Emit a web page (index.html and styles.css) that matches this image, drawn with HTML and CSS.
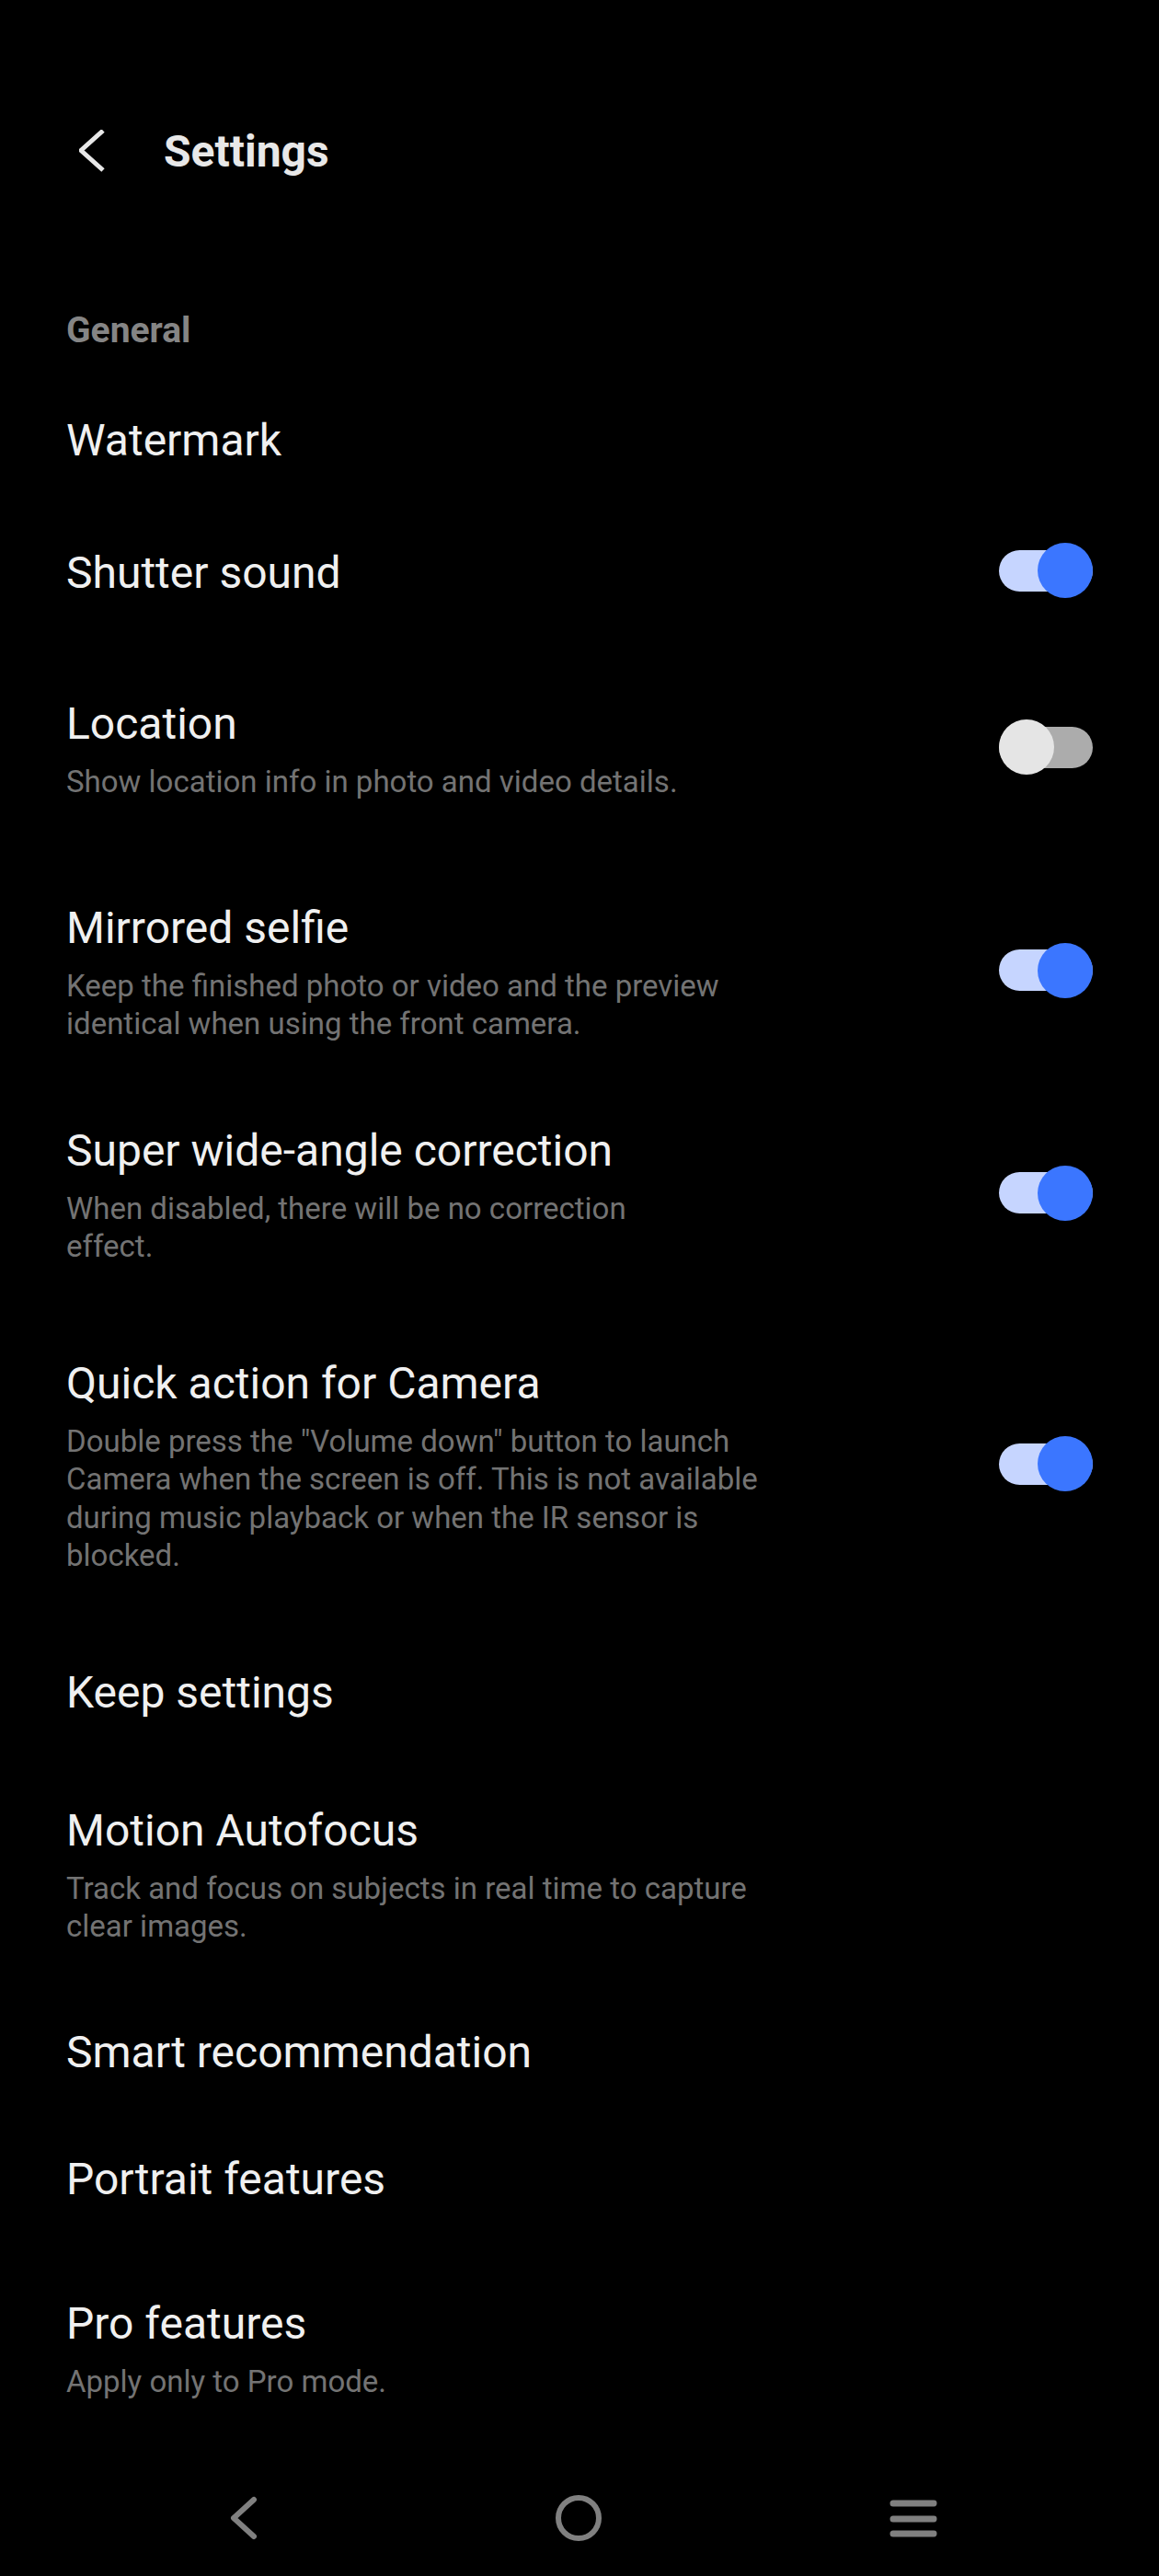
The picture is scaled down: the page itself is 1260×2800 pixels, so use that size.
FILE: index.html
```html
<!DOCTYPE html>
<html lang="en">
<head>
<meta charset="utf-8">
<title>Settings</title>
<link rel="stylesheet" href="styles.css">
</head>
<body>
<div class="screen">
  <header class="header">
    <svg class="back" width="30" height="48" viewBox="0 0 30 48" aria-hidden="true">
      <path d="M26 1 L2 22.5 L26 44" fill="none" stroke="#e8e8e8" stroke-width="5"/>
    </svg>
    <h1 class="title">Settings</h1>
  </header>

  <div class="section-label">General</div>

  <div class="list">
    <div class="row sp-first">
      <div class="row-text"><div class="row-title">Watermark</div></div>
    </div>

    <div class="row sp-83">
      <div class="row-text"><div class="row-title">Shutter sound</div></div>
      <span class="switch on"><span class="track"></span><span class="knob"></span></span>
    </div>

    <div class="row sp-104">
      <div class="row-text">
        <div class="row-title">Location</div>
        <div class="row-sub">Show location info in photo and video details.</div>
      </div>
      <span class="switch off"><span class="track"></span><span class="knob"></span></span>
    </div>

    <div class="row sp-110">
      <div class="row-text">
        <div class="row-title">Mirrored selfie</div>
        <div class="row-sub">Keep the finished photo or video and the preview identical when using the front camera.</div>
      </div>
      <span class="switch on"><span class="track"></span><span class="knob"></span></span>
    </div>

    <div class="row sp-89">
      <div class="row-text">
        <div class="row-title">Super wide-angle correction</div>
        <div class="row-sub">When disabled, there will be no correction<br>effect.</div>
      </div>
      <span class="switch on"><span class="track"></span><span class="knob"></span></span>
    </div>

    <div class="row sp-100">
      <div class="row-text">
        <div class="row-title">Quick action for Camera</div>
        <div class="row-sub">Double press the "Volume down" button to launch Camera when the screen is off. This is not available during music playback or when the IR sensor is blocked.</div>
      </div>
      <span class="switch on"><span class="track"></span><span class="knob"></span></span>
    </div>

    <div class="row sp-100">
      <div class="row-text"><div class="row-title">Keep settings</div></div>
    </div>

    <div class="row sp-94">
      <div class="row-text">
        <div class="row-title">Motion Autofocus</div>
        <div class="row-sub">Track and focus on subjects in real time to capture clear images.</div>
      </div>
    </div>

    <div class="row sp-88">
      <div class="row-text"><div class="row-title">Smart recommendation</div></div>
    </div>

    <div class="row sp-82">
      <div class="row-text"><div class="row-title">Portrait features</div></div>
    </div>

    <div class="row sp-101">
      <div class="row-text">
        <div class="row-title">Pro features</div>
        <div class="row-sub">Apply only to Pro mode.</div>
      </div>
    </div>
  </div>

  <nav class="navbar">
    <span class="nav-btn">
      <svg width="100" height="60" viewBox="0 0 100 60" aria-hidden="true">
        <path d="M61 10 L39 30 L61 50" fill="none" stroke="#808080" stroke-width="6" stroke-linecap="round" stroke-linejoin="round"/>
      </svg>
    </span>
    <span class="nav-btn">
      <svg width="100" height="60" viewBox="0 0 100 60" aria-hidden="true">
        <circle cx="50" cy="30" r="22" fill="none" stroke="#808080" stroke-width="6"/>
      </svg>
    </span>
    <span class="nav-btn">
      <svg width="100" height="60" viewBox="0 0 100 60" aria-hidden="true">
        <path d="M28 14 H72 M28 31 H72 M28 47 H72" fill="none" stroke="#808080" stroke-width="7" stroke-linecap="round"/>
      </svg>
    </span>
  </nav>
</div>
</body>
</html>
```

FILE: styles.css
```css
* { box-sizing: border-box; }

html, body {
  margin: 0;
  padding: 0;
  background: #000;
}

body {
  font-family: Roboto, "Noto Sans", "Liberation Sans", sans-serif;
  color: #f0f0f0;
}

.screen {
  width: 1260px;
  min-height: 2800px;
  display: flex;
  flex-direction: column;
}

.header {
  display: flex;
  align-items: center;
  gap: 62px;
  height: 66px;
  margin-top: 132px;
  padding-left: 86px;
}

.back { display: block; flex: none; }

.title {
  margin: 0;
  font-size: 48px;
  line-height: 66px;
  font-weight: 700;
  color: #e8e8e8;
}

.section-label {
  margin-top: 139px;
  padding-left: 72px;
  font-size: 39px;
  line-height: 44px;
  font-weight: 700;
  color: #858585;
}

.list {
  display: flex;
  flex-direction: column;
}

.row {
  display: flex;
  align-items: center;
  justify-content: space-between;
  padding: 0 72px;
}

.sp-first { margin-top: 70px; }
.sp-82 { margin-top: 82px; }
.sp-83 { margin-top: 83px; }
.sp-88 { margin-top: 88px; }
.sp-89 { margin-top: 89px; }
.sp-94 { margin-top: 94px; }
.sp-100 { margin-top: 100px; }
.sp-101 { margin-top: 101px; }
.sp-104 { margin-top: 104px; }
.sp-110 { margin-top: 110px; }

.row-title {
  font-size: 48px;
  line-height: 56px;
  color: #f0f0f0;
}

.row-sub {
  margin-top: 14px;
  max-width: 800px;
  font-size: 33px;
  line-height: 41.5px;
  color: #737373;
}

.switch {
  position: relative;
  flex: none;
  width: 102px;
  height: 60px;
  margin-bottom: 5px;
}

.switch .track {
  position: absolute;
  left: 0;
  right: 0;
  top: 7.5px;
  height: 45px;
  border-radius: 23px;
}

.switch .knob {
  position: absolute;
  top: 0;
  width: 60px;
  height: 60px;
  border-radius: 50%;
}

.switch.on .track { background: #c6d5ff; }
.switch.on .knob { right: 0; background: #3b76ff; }

.switch.off .track { background: #acacac; }
.switch.off .knob { left: 0; background: #e5e5e5; }

.navbar {
  margin-top: auto;
  height: 126px;
  display: flex;
  align-items: center;
  gap: 264px;
  padding-left: 215px;
}

.nav-btn {
  display: flex;
  width: 100px;
  height: 60px;
  justify-content: center;
  align-items: center;
}

.nav-btn svg { display: block; }
```
